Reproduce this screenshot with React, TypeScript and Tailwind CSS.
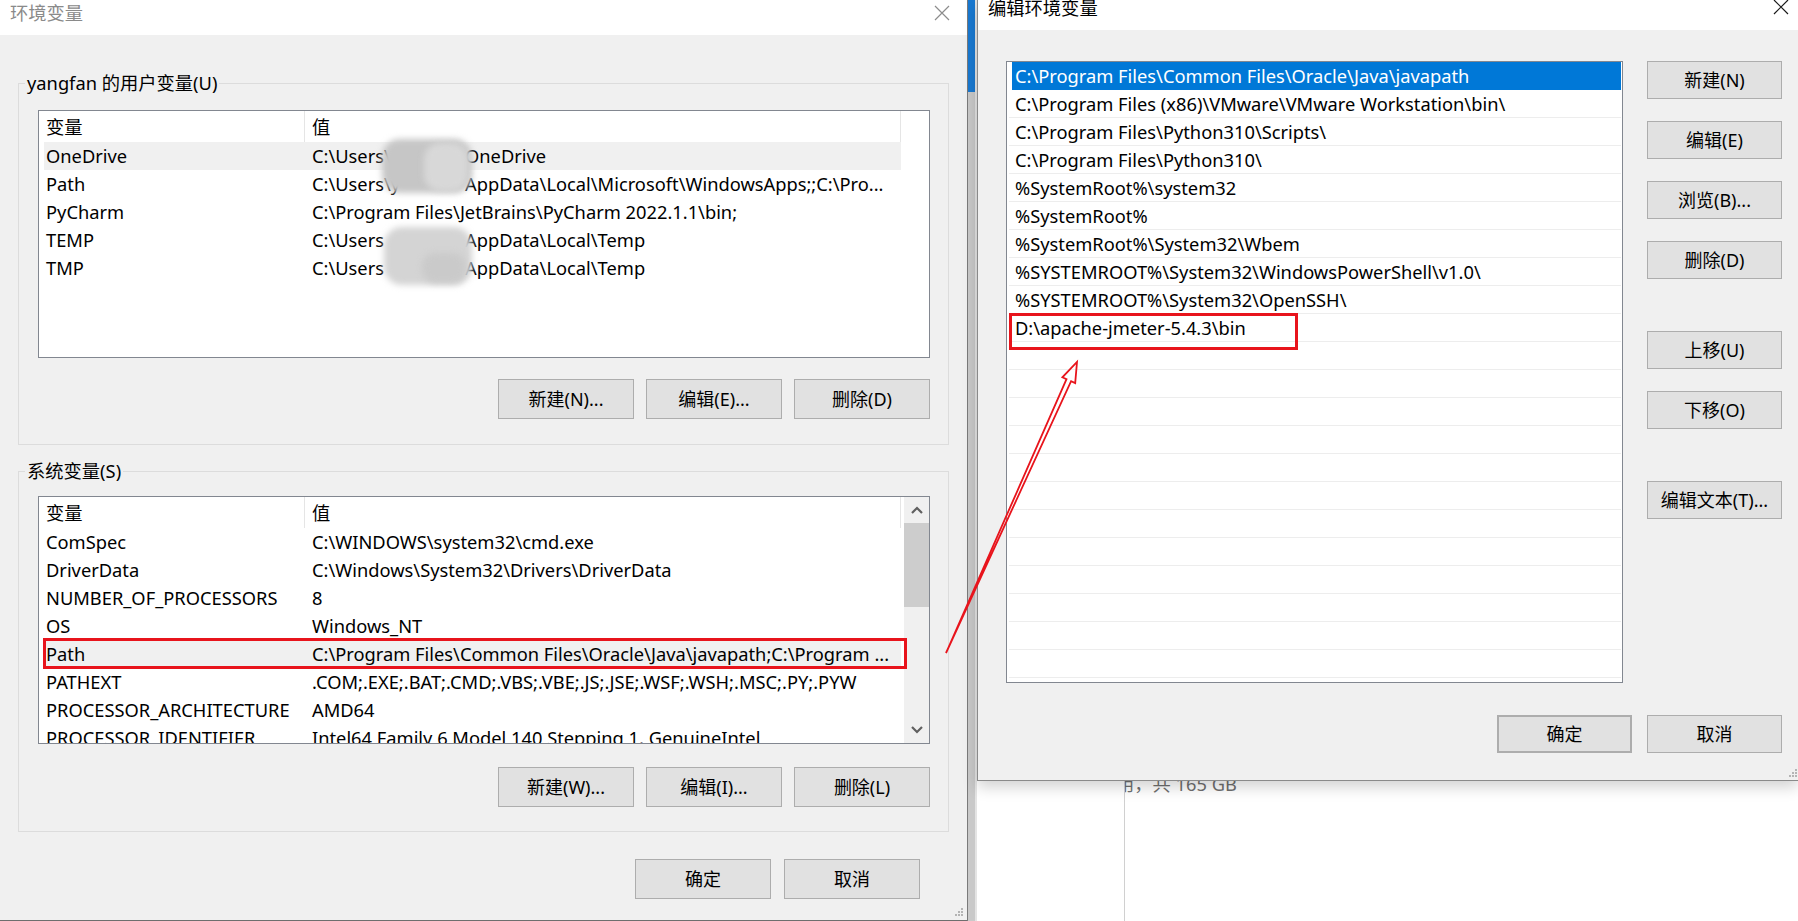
import React from 'react';

const userRows = [
  { name: 'OneDrive', pre: 'C:\\Users\\', value: 'OneDrive', selected: true },
  { name: 'Path', pre: 'C:\\Users\\y', value: 'AppData\\Local\\Microsoft\\WindowsApps;;C:\\Pro...' },
  { name: 'PyCharm', value: 'C:\\Program Files\\JetBrains\\PyCharm 2022.1.1\\bin;' },
  { name: 'TEMP', pre: 'C:\\Users', value: 'AppData\\Local\\Temp' },
  { name: 'TMP', pre: 'C:\\Users', value: 'AppData\\Local\\Temp' },
];

const systemRows = [
  { name: 'ComSpec', value: 'C:\\WINDOWS\\system32\\cmd.exe' },
  { name: 'DriverData', value: 'C:\\Windows\\System32\\Drivers\\DriverData' },
  { name: 'NUMBER_OF_PROCESSORS', value: '8' },
  { name: 'OS', value: 'Windows_NT' },
  { name: 'Path', value: 'C:\\Program Files\\Common Files\\Oracle\\Java\\javapath;C:\\Program ...', selected: true },
  { name: 'PATHEXT', value: '.COM;.EXE;.BAT;.CMD;.VBS;.VBE;.JS;.JSE;.WSF;.WSH;.MSC;.PY;.PYW' },
  { name: 'PROCESSOR_ARCHITECTURE', value: 'AMD64' },
  { name: 'PROCESSOR_IDENTIFIER', value: 'Intel64 Family 6 Model 140 Stepping 1, GenuineIntel' },
];

const pathEntries = [
  'C:\\Program Files\\Common Files\\Oracle\\Java\\javapath',
  'C:\\Program Files (x86)\\VMware\\VMware Workstation\\bin\\',
  'C:\\Program Files\\Python310\\Scripts\\',
  'C:\\Program Files\\Python310\\',
  '%SystemRoot%\\system32',
  '%SystemRoot%',
  '%SystemRoot%\\System32\\Wbem',
  '%SYSTEMROOT%\\System32\\WindowsPowerShell\\v1.0\\',
  '%SYSTEMROOT%\\System32\\OpenSSH\\',
  'D:\\apache-jmeter-5.4.3\\bin',
];

// classic win32 push button; size differs a little between the two dialogs
const WinButton = ({ label, small, className = '' }: { label: string; small?: boolean; className?: string }) => (
  <button
    className={`${small ? 'h-[38px] w-[135px]' : 'h-[40px] w-[136px]'} bg-[#e1e1e1] border border-[#adadad] text-[18px] text-black leading-none ${className}`}
  >
    {label}
  </button>
);

const CloseIcon = ({ color }: { color: string }) => (
  <svg width="16" height="16" viewBox="0 0 16 16">
    <path d="M1 1 L15 15 M15 1 L1 15" stroke={color} strokeWidth="1.2" fill="none" />
  </svg>
);

const Grip = () => (
  <svg width="10" height="10" viewBox="0 0 10 10">
    <rect x="7" y="1" width="2" height="2" fill="#b4b4b4" />
    <rect x="4" y="4" width="2" height="2" fill="#b4b4b4" />
    <rect x="7" y="4" width="2" height="2" fill="#b4b4b4" />
    <rect x="1" y="7" width="2" height="2" fill="#b4b4b4" />
    <rect x="4" y="7" width="2" height="2" fill="#b4b4b4" />
    <rect x="7" y="7" width="2" height="2" fill="#b4b4b4" />
  </svg>
);

const Chevron = ({ down }: { down?: boolean }) => (
  <svg width="12" height="8" viewBox="0 0 12 8">
    <path d={down ? 'M1 1 L6 6 L11 1' : 'M1 7 L6 2 L11 7'} stroke="#606060" strokeWidth="2.2" fill="none" />
  </svg>
);

const ListHeader = () => (
  <div className="flex h-[31px] items-center border-r border-[#e5e5e5] w-[862px]">
    <div className="w-[266px] h-full flex items-center pl-[7px] border-r border-[#e5e5e5]">变量</div>
    <div className="pl-[7px]">值</div>
  </div>
);

type Row = { name: string; value: string; pre?: string; selected?: boolean };

const VarRow = ({ row }: { row: Row }) => (
  <div className={`flex h-[28px] items-center whitespace-nowrap ml-[5px] w-[857px] ${row.selected ? 'bg-[#f0f0f0]' : ''}`}>
    <div className="w-[261px] pl-[2px]">{row.name}</div>
    <div className="pl-[7px] flex">
      {row.pre !== undefined && <span className="inline-block w-[153px]">{row.pre}</span>}
      <span>{row.value}</span>
    </div>
  </div>
);

export default function App() {
  return (
    <div className="relative w-[1798px] h-[921px] overflow-hidden bg-white flex font-['Noto_Sans','Noto_Sans_CJK_SC',sans-serif] text-[18.3px] text-black">
      {/* 环境变量 dialog */}
      <div className="w-[967px] h-[921px] flex flex-col bg-[#f0f0f0] border-b border-[#6e6e6e]">
        <div className="h-[35px] bg-white flex items-start justify-between pl-[10px] pr-[17px] shrink-0">
          <span className="text-[#8a8a8a] leading-[24px] mt-[1px]">环境变量</span>
          <div className="mt-[5px]"><CloseIcon color="#8c8c8c" /></div>
        </div>

        <fieldset className="mx-[18px] mt-[36px] border border-[#dcdcdc] pl-[19px] pb-[25px] pr-[18px]">
          <legend className="-ml-[13px] px-[2px] leading-[24px]">yangfan 的用户变量(U)</legend>
          <div className="relative mt-[15px] h-[248px] border border-[#828790] bg-white overflow-hidden">
            <ListHeader />
            {userRows.map((r) => (
              <VarRow key={r.name} row={r} />
            ))}
            {/* blurred-out user name */}
            <div className="absolute left-[343px] top-[28px] w-[90px] h-[54px] rounded-[18px] bg-[#c6c6c6] blur-[3px]" />
            <div className="absolute left-[385px] top-[32px] w-[44px] h-[48px] rounded-[16px] bg-[#d8d8d8] blur-[3px]" />
            <div className="absolute left-[345px] top-[116px] w-[88px] h-[58px] rounded-[18px] bg-[#d4d4d4] blur-[3px]" />
            <div className="absolute left-[383px] top-[142px] w-[44px] h-[30px] rounded-[14px] bg-[#cacaca] blur-[3px]" />
          </div>
          <div className="flex justify-end gap-[12px] mt-[21px]">
            <WinButton label="新建(N)..." />
            <WinButton label="编辑(E)..." />
            <WinButton label="删除(D)" />
          </div>
        </fieldset>

        <fieldset className="mx-[18px] mt-[14px] border border-[#dcdcdc] pl-[19px] pb-[24px] pr-[18px]">
          <legend className="-ml-[13px] px-[2px] leading-[24px]">系统变量(S)</legend>
          <div className="relative mt-[13px] h-[248px] border border-[#828790] bg-white flex">
            <div className="flex-1 overflow-hidden">
              <ListHeader />
              {systemRows.map((r) => (
                <VarRow key={r.name} row={r} />
              ))}
            </div>
            <div className="w-[25px] flex flex-col bg-[#f0f0f0]">
              <div className="h-[26px] flex items-center justify-center"><Chevron /></div>
              <div className="h-[84px] bg-[#cdcdcd]" />
              <div className="flex-1" />
              <div className="h-[26px] flex items-center justify-center"><Chevron down /></div>
            </div>
            <div className="absolute left-[4px] top-[141px] w-[864px] h-[31px] border-[3px] border-[#e8141c]" />
          </div>
          <div className="flex justify-end gap-[12px] mt-[23px]">
            <WinButton label="新建(W)..." />
            <WinButton label="编辑(I)..." />
            <WinButton label="删除(L)" />
          </div>
        </fieldset>

        <div className="flex justify-end gap-[13px] mt-[27px] pr-[47px]">
          <WinButton label="确定" />
          <WinButton label="取消" />
        </div>
        <div className="flex-1 flex items-end justify-end pr-[3px] pb-[3px]">
          <Grip />
        </div>
      </div>

      {/* window edge between the dialogs */}
      <div className="w-[10px] h-[921px] flex flex-col border-l border-[#7a7a7a] border-r-[2px] border-r-[#e4e4e4]">
        <div className="h-[92px] bg-[#1979d1]" />
        <div className="flex-1 bg-[#c9c9c9]" />
      </div>

      {/* 编辑环境变量 dialog + desktop below */}
      <div className="flex-1 flex flex-col">
        <div className="relative z-10 h-[781px] flex flex-col bg-[#f0f0f0] border-l border-b border-[#8a8a8a] shadow-[0_6px_14px_rgba(0,0,0,0.18)]">
          <div className="h-[30px] bg-white flex items-start justify-between pl-[10px] pr-[9px] shrink-0 overflow-hidden">
            <span className="leading-[24px] -mt-[4px]">编辑环境变量</span>
            <div className="-mt-[1px]"><CloseIcon color="#1a1a1a" /></div>
          </div>
          <div className="flex pl-[28px] pr-[16px] pt-[31px]">
            <div className="relative w-[617px] h-[622px] border border-[#828790] bg-white overflow-hidden">
              {Array.from({ length: 22 }).map((_, i) => {
                const text = pathEntries[i];
                const first = i === 0;
                return (
                  <div
                    key={i}
                    className={`h-[28px] mr-[1px] flex items-center whitespace-nowrap ${
                      first ? 'bg-[#0078d7] text-white ml-[5px] pl-[3px]' : 'ml-[2px] pl-[6px] border-b border-[#ededed]'
                    }`}
                  >
                    {text}
                  </div>
                );
              })}
              <div className="absolute left-[2px] top-[251px] w-[289px] h-[37px] border-[3px] border-[#e8141c]" />
            </div>
            <div className="ml-[24px] flex flex-col w-[135px]">
              <WinButton small label="新建(N)" />
              <WinButton small label="编辑(E)" className="mt-[22px]" />
              <WinButton small label="浏览(B)..." className="mt-[22px]" />
              <WinButton small label="删除(D)" className="mt-[22px]" />
              <WinButton small label="上移(U)" className="mt-[52px]" />
              <WinButton small label="下移(O)" className="mt-[22px]" />
              <WinButton small label="编辑文本(T)..." className="mt-[52px]" />
            </div>
          </div>
          <div className="flex justify-end gap-[15px] pr-[16px] mt-[32px]">
            <WinButton small label="确定" className="border-2 border-[#0078d7]" />
            <WinButton small label="取消" />
          </div>
          <div className="flex-1 flex items-end justify-end pb-[2px]">
            <Grip />
          </div>
        </div>
        <div className="flex-1 bg-white pl-[147px]">
          <div className="h-full border-l border-[#d0d0d0] overflow-hidden">
            <div className="-mt-[9px] -ml-[9px] leading-[24px] text-[#6f6f6f] whitespace-nowrap">用，共 165 GB</div>
          </div>
        </div>
      </div>

      {/* red annotation arrow */}
      <svg className="absolute left-0 top-0 pointer-events-none z-20" width="1798" height="921" viewBox="0 0 1798 921">
        <polygon
          points="946,653 1066.5,379.2 1062.4,377.3 1077,362 1075.2,383.1 1071.1,381.2"
          fill="none"
          stroke="#e8141c"
          strokeWidth="1.8"
          strokeLinejoin="miter"
        />
      </svg>
    </div>
  );
}
